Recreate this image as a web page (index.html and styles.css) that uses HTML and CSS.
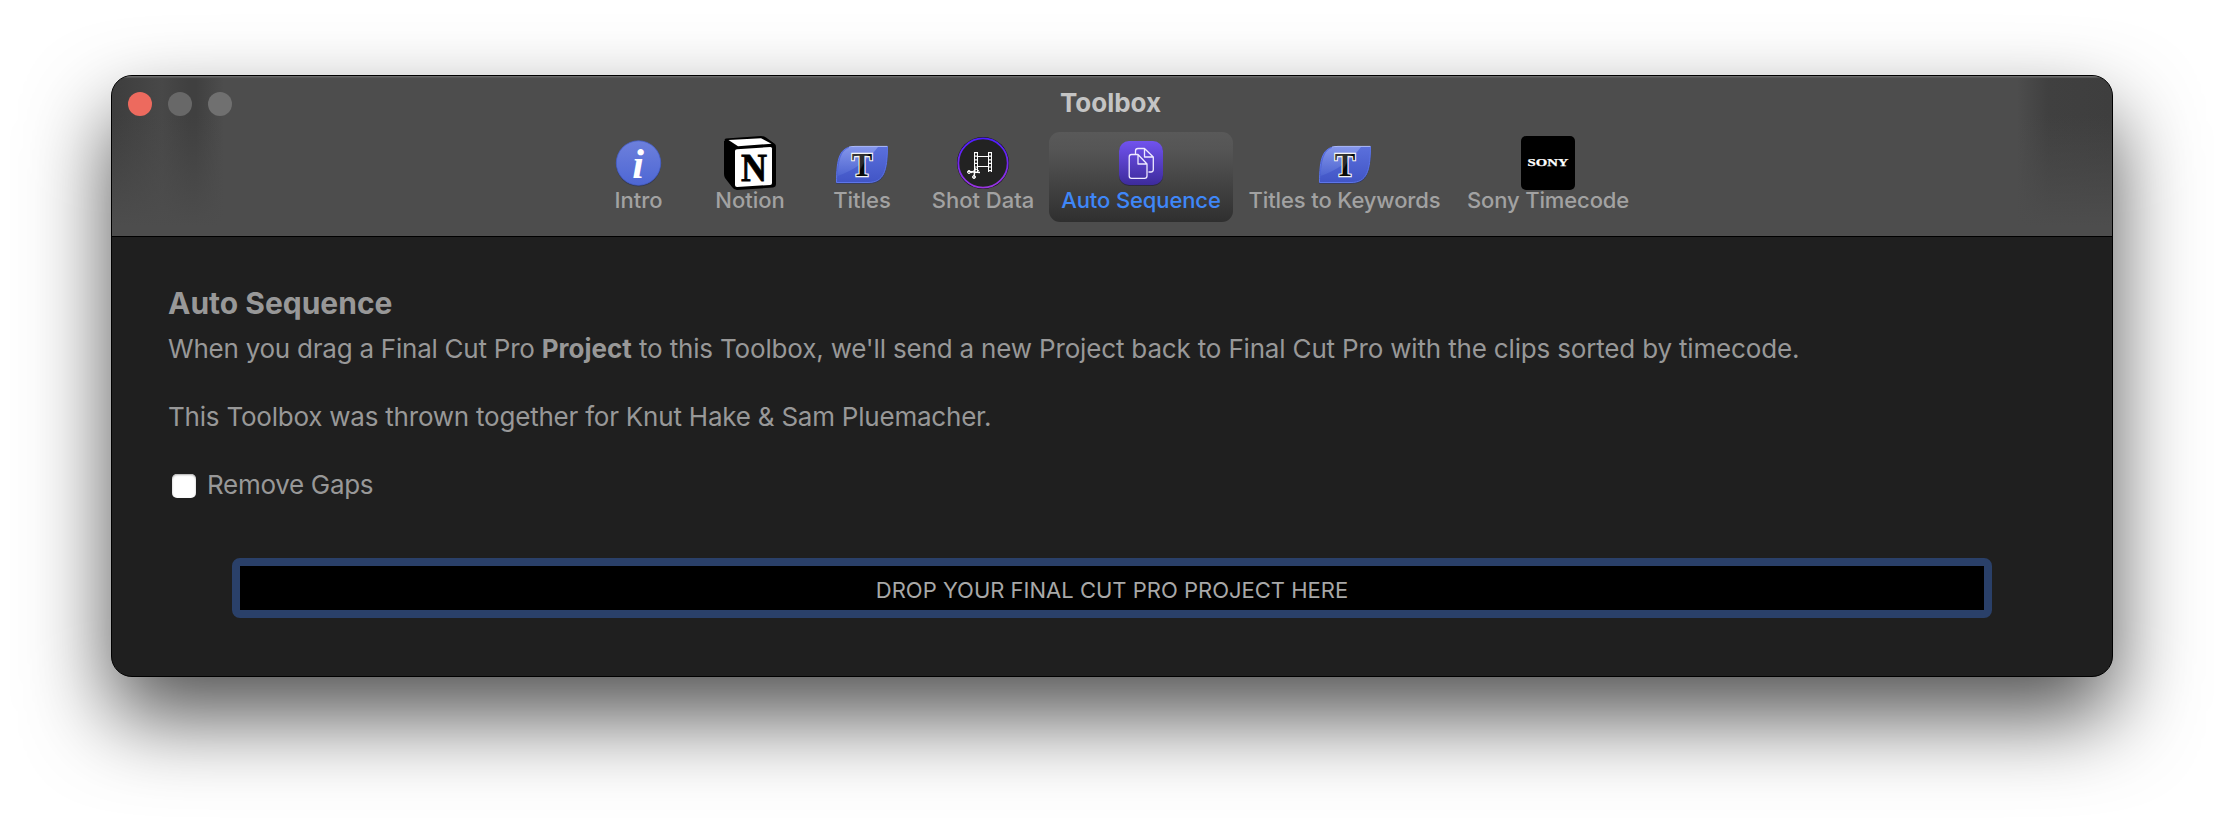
FILE: index.html
```
<!DOCTYPE html>
<html lang="en">
<head>
<meta charset="utf-8">
<title>Toolbox</title>
<link rel="stylesheet" href="styles.css">
</head>
<body>
<svg class="defs" width="0" height="0" aria-hidden="true">
  <defs>
    <linearGradient id="blue" x1="0" y1="0" x2="0" y2="1"><stop offset="0" stop-color="#6d80dc"/><stop offset="1" stop-color="#4e67d4"/></linearGradient>
    <linearGradient id="leaf" x1="0" y1="0" x2="0" y2="1"><stop offset="0" stop-color="#5b70dc"/><stop offset="1" stop-color="#4155c6"/></linearGradient>
    <linearGradient id="shine" x1="0" y1="0" x2="0" y2="1"><stop offset="0" stop-color="#8fa0ee"/><stop offset="1" stop-color="#5067d2"/></linearGradient>
    <linearGradient id="ink" x1="0" y1="0" x2="1" y2="1"><stop offset="0" stop-color="#3c3c3c"/><stop offset=".5" stop-color="#2a2a2a"/><stop offset=".55" stop-color="#050505"/><stop offset="1" stop-color="#1c1c1c"/></linearGradient>
    <linearGradient id="ring" x1="0" y1="0" x2="0" y2="1"><stop offset="0" stop-color="#4f1dff"/><stop offset="1" stop-color="#9a35e0"/></linearGradient>
    <linearGradient id="violet" x1="0" y1="0" x2="0" y2="1"><stop offset="0" stop-color="#7153ee"/><stop offset="1" stop-color="#3d2b9c"/></linearGradient>
    <symbol id="titles-icon" viewBox="0 0 54 54">
      <path d="M1.200 47.700C1.400 24 3.500 11.500 20 11.500H53C52.500 37 49 47.700 33 47.700Z" fill="#27326f" opacity=".7"/>
      <path d="M1.500 46.500C1.700 23 4 10.500 20 10.500H52.500C52.200 35 49 46.500 33 46.500Z" fill="url(#leaf)" stroke="#5c75ea" stroke-width="1"/>
      <path d="M2.500 40C4 20 7 11 20 11H43Q28 31 2.500 40Z" fill="url(#shine)" opacity=".8"/>
      <path d="M14 11.200Q17 10.400 20 10.400H52.300" fill="none" stroke="#aebbf5" stroke-width="1"/>
      <text class="icon-serif" x="27" y="39.500" font-size="33" text-anchor="middle" textLength="20.500" lengthAdjust="spacingAndGlyphs" fill="url(#ink)" stroke="#f4f4f4" stroke-width="2.400" paint-order="stroke">T</text>
    </symbol>
  </defs>
</svg>
<main class="window">
  <header class="toolbar">
    <div class="titlebar">
      <div class="lights"><i class="light close"></i><i class="light"></i><i class="light zoom"></i></div>
      <h1 class="title">Toolbox</h1>
    </div>
    <nav class="tabs">
      <a class="tab"><svg class="icon" viewBox="0 0 54 54"><circle cx="26.500" cy="28" r="22.500" fill="#252c55" opacity=".6"/><circle cx="26.500" cy="27" r="22.200" fill="url(#blue)" stroke="#4560cc" stroke-width=".8"/><text class="icon-serif italic" x="26" y="41.500" font-size="42" text-anchor="middle" fill="#fff">i</text></svg><span class="label">Intro</span></a>
      <a class="tab"><svg class="icon" viewBox="0 0 54 54"><path d="M2 4.500Q1 3 3 2.500L38 0Q41 0 43 1.500L52 8Q53 9 53 11V48Q53 51 50 51.500L14 54Q11 54 9 51L2 42Q1 40 1 38V5Z" fill="#000"/><path d="M5.500 4L38 2.200L48.500 7.800L15 10.200Z" fill="#fff"/><path d="M12 15Q12 13.500 14 13.300L47.500 11Q49 11 49 12.500V47Q49 48.800 47 49L14 51Q12 51 12 49Z" fill="#fff"/><text class="icon-serif" x="31" y="44.500" font-size="39" text-anchor="middle" textLength="26" lengthAdjust="spacingAndGlyphs" fill="#000" stroke="#000" stroke-width=".8">N</text></svg><span class="label">Notion</span></a>
      <a class="tab"><svg class="icon"><use href="#titles-icon"/></svg><span class="label">Titles</span></a>
      <a class="tab"><svg class="icon" viewBox="0 0 54 54"><circle cx="27" cy="27" r="26" fill="#111"/><circle cx="27" cy="27" r="24.700" fill="#222" stroke="url(#ring)" stroke-width="1.800"/><g fill="none" stroke="#fff"><path d="M18.500 16V36M21.500 16V36M32.500 16V36M35.500 16V36" stroke-width="1"/><path d="M20 16V33M34 16V36" stroke-width="2.200" stroke-dasharray="1.200 2.400"/><path d="M22 20.500H32M22 30.500H32" stroke-width="1.200"/><path d="M12 35.500L24 36.500M19 32L18 42" stroke-width="1.500"/><circle cx="13" cy="36" r="1.500"/><circle cx="18" cy="41" r="1.500"/><path d="M15 37L20 33L23 35" stroke-width="1"/></g></svg><span class="label">Shot Data</span></a>
      <a class="tab selected"><svg class="icon" viewBox="0 0 54 54"><rect x="5" y="6" width="44" height="44" rx="10" fill="#1d1740" opacity=".55"/><rect x="5" y="5" width="44" height="44" rx="10" fill="url(#violet)"/><g fill="none" stroke="#eeeaff" stroke-width="1.300" stroke-linejoin="round"><path d="M21.500 18V15Q21.500 12.500 24 12.500H30.500L39.300 21V33.500Q39.300 36 37 36H34.500M30.500 12.500V21H39.300"/><path d="M17.500 18.500H24L33 28V40Q33 42.300 30.500 42.300H17.500Q15.200 42.300 15.200 40V21Q15.200 18.500 17.500 18.500ZM24 18.500V28H33"/></g></svg><span class="label tight">Auto Sequence</span></a>
      <a class="tab"><svg class="icon"><use href="#titles-icon"/></svg><span class="label tight">Titles to Keywords</span></a>
      <a class="tab"><svg class="icon" viewBox="0 0 54 54"><rect width="54" height="54" rx="5" fill="#000"/><text class="icon-serif" x="6.500" y="30.300" font-size="9.800" textLength="41" lengthAdjust="spacingAndGlyphs" fill="#fff" stroke="#fff" stroke-width=".25">SONY</text></svg><span class="label tight">Sony Timecode</span></a>
    </nav>
  </header>
  <section class="content">
    <h2 class="heading">Auto Sequence</h2>
    <p class="para lead"><span class="opening">When you drag a Final Cut Pro </span><b>Project</b> to this Toolbox, we'll send a new Project back to Final Cut Pro with the clips sorted by timecode.</p>
    <p class="para">This Toolbox was thrown together for Knut Hake &amp; Sam Pluemacher.</p>
    <label class="option"><i class="checkbox"></i>Remove Gaps</label>
    <div class="drop">DROP YOUR FINAL CUT PRO PROJECT HERE</div>
  </section>
</main>
</body>
</html>
```
FILE: styles.css
```
* { box-sizing: border-box; }
body {
  margin: 0;
  height: 824px;
  padding: 75px 111px 0;
  overflow: hidden;
  background: #fff;
  font-family: Inter, "Liberation Sans", sans-serif;
}
.defs { position: absolute; }
.window {
  width: 2002px;
  height: 602px;
  border: 1px solid #000;
  border-radius: 21px;
  overflow: hidden;
  background: #1f1f1f;
  box-shadow: 0 40px 84px rgba(0, 0, 0, .68);
}
.toolbar {
  height: 161px;
  border-bottom: 1px solid #000;
  box-shadow: inset 0 1px 0 #6b6b6b, inset 0 2px 1px #5a5a5a;
  background:
    linear-gradient(transparent 40px, #4d4d4d 150px),
    linear-gradient(90deg, #3d3d3d, #484848 50px, #404040 76px, #404040 84px, #4d4d4d 112px, #4d4d4d 1905px, #404040 1936px, #3e3e3e);
}
.titlebar { display: flex; align-items: center; height: 56px; padding-left: 16px; }
.lights { display: flex; gap: 16px; width: 104px; }
.light { width: 24px; height: 24px; border-radius: 50%; background: #686868; }
.close { background: #ed6a5e; }
.zoom { background: #707070; }
.title { flex: 1; margin: 0 123px 2px 0; text-align: center; font-size: 26px; line-height: 32px; font-weight: 700; color: #c4c4c4; }
.tabs { display: grid; grid-template-columns: 111px 112px 112px 130px 186px 221px 186px; padding-left: 471px; }
.tab { display: flex; flex-direction: column; align-items: center; height: 90px; padding-top: 4px; margin: 0 1px; border-radius: 11px; color: #a2a2a2; }
.selected { color: #3f87f8; background: linear-gradient(#595959, #555 20%, #2f2f2f); }
.icon { display: block; width: 54px; height: 54px; flex: none; }
.icon-serif { font-family: "Liberation Serif", serif; font-weight: 700; }
.italic { font-style: italic; }
.label { margin-top: -3px; font-size: 22px; line-height: 26px; white-space: nowrap; font-weight: 500; }
.tight { letter-spacing: -.12px; }
.content { padding: 46px 56px 0; color: #989898; }
.heading { margin: 0 0 9px; font-size: 30px; line-height: 40px; font-weight: 700; }
.para { margin: 0 0 34px; font-size: 26px; line-height: 34px; letter-spacing: -.22px; white-space: nowrap; }
.lead { letter-spacing: -.17px; }
.opening { letter-spacing: -.24px; }
.lead b { letter-spacing: 0; }
.option { display: flex; align-items: center; height: 34px; font-size: 26px; line-height: 34px; letter-spacing: -.3px; }
.checkbox { width: 24px; height: 24px; margin: 2px 11px 0 4px; border-radius: 5px; background: #fff; box-shadow: inset 0 1px 2px #aaa; }
.drop { display: flex; align-items: center; justify-content: center; height: 60px; margin: 56px 64px 0; padding-top: 4px; border: 8px solid #2a4069; border-radius: 8px; background: #000; color: #a8a8a8; font-size: 22px; }
```
